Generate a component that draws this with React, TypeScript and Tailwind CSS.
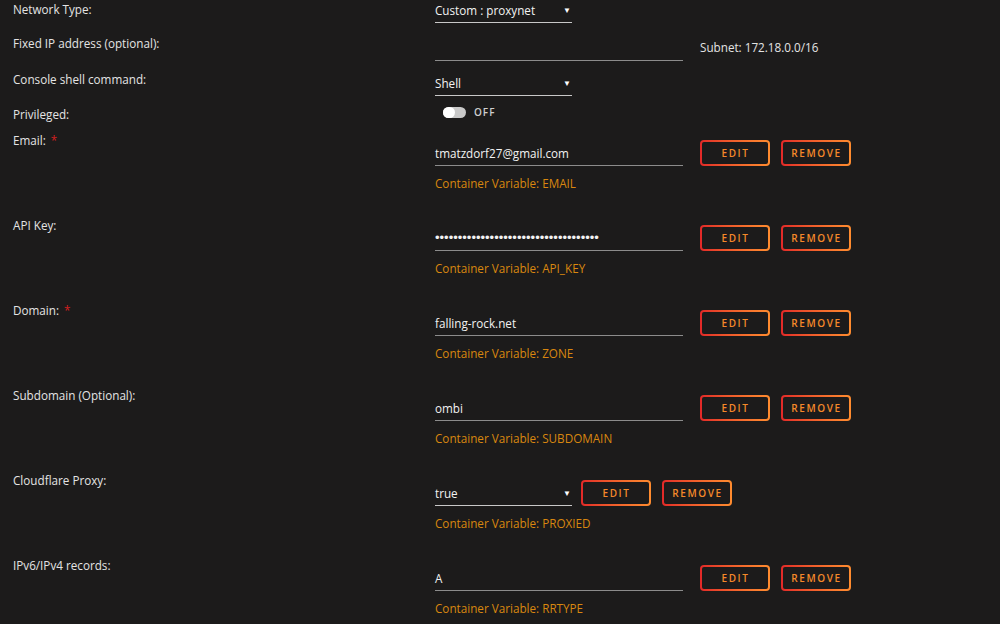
import React from 'react';

const font = { fontFamily: '"Open Sans", "Liberation Sans", sans-serif' };

function ActionButton({ children }: { children: React.ReactNode }) {
    return (
        <div className="w-[70px] h-[26px] rounded-[4px] p-[2px] bg-gradient-to-r from-[#e22828] to-[#ff8c2f]">
            <div className="w-full h-full rounded-[2px] bg-[#1c1b1b] flex items-center justify-center text-[10px] font-semibold tracking-[1.6px] text-[#f5892a] pl-[1px]">
                {children}
            </div>
        </div>
    );
}

function Label({ text, required }: { text: string; required?: boolean }) {
    return (
        <div className="w-[435px] shrink-0 pl-[13px] leading-[18px] text-[#e4e4e4]">
            {text}
            {required && <span className="text-[#d41f1f] ml-[5px]">*</span>}
        </div>
    );
}

function TextField({ value, dots }: { value: string; dots?: boolean }) {
    return (
        <div className="w-[248px] h-[26px] border-b border-[#8c8c8c] pt-[4px] leading-[18px] text-[#f2f2f2]" style={dots ? { fontFamily: '"Liberation Sans", sans-serif', fontSize: '13px' } : undefined}>
            {value}
        </div>
    );
}

function SelectField({ value }: { value: string }) {
    return (
        <div className="w-[137px] h-[26px] border-b border-[#c8c8c8] pt-[4px] leading-[18px] text-[#f2f2f2] flex justify-between pr-[1px]">
            <span>{value}</span>
            <span className="text-[8px] leading-[18px] text-white">▼</span>
        </div>
    );
}

interface VarRow {
    label: string;
    required?: boolean;
    value: string;
    variable: string;
    select?: boolean;
    dots?: boolean;
}

const rows: VarRow[] = [
    { label: 'Email:', required: true, value: 'tmatzdorf27@gmail.com', variable: 'EMAIL' },
    { label: 'API Key:', value: '•'.repeat(36), variable: 'API_KEY', dots: true },
    { label: 'Domain:', required: true, value: 'falling-rock.net', variable: 'ZONE' },
    { label: 'Subdomain (Optional):', value: 'ombi', variable: 'SUBDOMAIN' },
    { label: 'Cloudflare Proxy:', value: 'true', variable: 'PROXIED', select: true },
    { label: 'IPv6/IPv4 records:', value: 'A', variable: 'RRTYPE' },
];

export default function App() {
    return (
        <div className="w-[1000px] h-[624px] overflow-hidden bg-[#1c1b1b] text-[11.7px]" style={font}>
            {/* Network Type */}
            <div className="flex h-[34px]">
                <Label text="Network Type:" />
                <div className="-mt-[3px]">
                    <SelectField value="Custom : proxynet" />
                </div>
            </div>

            {/* Fixed IP */}
            <div className="flex h-[36px]">
                <Label text="Fixed IP address (optional):" />
                <div className="w-[248px] h-[27px] border-b border-[#8c8c8c]" />
                <div className="ml-[17px] pt-[4px] leading-[18px] text-[#e4e4e4]">Subnet: 172.18.0.0/16</div>
            </div>

            {/* Console shell */}
            <div className="flex h-[35px]">
                <Label text="Console shell command:" />
                <SelectField value="Shell" />
            </div>

            {/* Privileged */}
            <div className="flex h-[26px]">
                <Label text="Privileged:" />
                <div className="flex items-center h-[14px] pl-[8px]">
                    <div className="w-[23px] h-[11px] rounded-full bg-[#c9c9c9] relative">
                        <div className="absolute left-0 top-0 w-[12px] h-[11px] rounded-full bg-white" />
                    </div>
                    <span className="ml-[8px] text-[10px] font-semibold tracking-[1px] text-[#cfcfcf]">OFF</span>
                </div>
            </div>

            {rows.map((r) => (
                <div key={r.variable} className="flex h-[85px]">
                    <Label text={r.label} required={r.required} />
                    <div className="flex flex-col pt-[9px]">
                        <div className="flex items-start">
                            {r.select ? (
                                <>
                                    <SelectField value={r.value} />
                                    <div className="ml-[9px]"><ActionButton>EDIT</ActionButton></div>
                                </>
                            ) : (
                                <>
                                    <TextField value={r.value} dots={r.dots} />
                                    <div className="ml-[17px]"><ActionButton>EDIT</ActionButton></div>
                                </>
                            )}
                            <div className="ml-[11px]"><ActionButton>REMOVE</ActionButton></div>
                        </div>
                        <div className="mt-[8px] leading-[18px] text-[#d9870f]">Container Variable: {r.variable}</div>
                    </div>
                </div>
            ))}
        </div>
    );
}
